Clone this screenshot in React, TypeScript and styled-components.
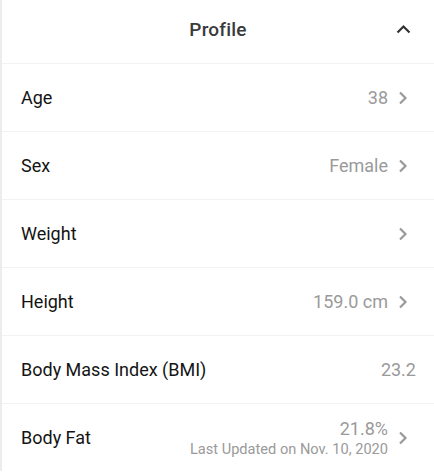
import React from 'react';
import styled, { createGlobalStyle } from 'styled-components';

const GlobalStyle = createGlobalStyle`
  html, body {
    margin: 0;
    padding: 0;
    background: #ffffff;
  }
  body {
    font-family: Roboto, "Liberation Sans", sans-serif;
  }
`;

const Panel = styled.div`
  width: 434px;
  box-sizing: border-box;
  border-left: 2px solid #ececec;
  background: #fff;
`;

const Header = styled.div`
  height: 63px;
  display: grid;
  grid-template-columns: 1fr auto 1fr;
  align-items: center;
  padding: 0 23px;
  border-bottom: 1px solid #f2f2f2;
`;

const Title = styled.h1`
  grid-column: 2;
  margin: 0 0 4px;
  font-size: 19px;
  font-weight: 500;
  color: #3a3a3a;
  letter-spacing: 0.2px;
`;

const CollapseIcon = styled.svg`
  grid-column: 3;
  justify-self: end;
  width: 15px;
  height: 10px;
  margin-top: -5px;
`;

const Row = styled.div`
  height: 67px;
  display: flex;
  align-items: center;
  padding: 0 18px 0 19px;
  border-bottom: 1px solid #f2f2f2;

  &:last-child {
    border-bottom: none;
  }
`;

const Label = styled.div`
  flex: 1;
  font-size: 18px;
  color: #141414;
`;

const ValueBlock = styled.div`
  display: flex;
  flex-direction: column;
  align-items: flex-end;
`;

const Value = styled.span`
  font-size: 18px;
  color: #9a9a9a;
`;

const Note = styled.span`
  font-size: 14.6px;
  color: #9a9a9a;
  margin-top: 1px;
`;

const Chevron = styled.svg`
  width: 10px;
  height: 14px;
  margin: 0 8px 0 10px;
  flex-shrink: 0;
`;

type Item = {
  label: string;
  value?: string;
  note?: string;
  link: boolean;
};

const items: Item[] = [
  { label: 'Age', value: '38', link: true },
  { label: 'Sex', value: 'Female', link: true },
  { label: 'Weight', link: true },
  { label: 'Height', value: '159.0 cm', link: true },
  { label: 'Body Mass Index (BMI)', value: '23.2', link: false },
  { label: 'Body Fat', value: '21.8%', note: 'Last Updated on Nov. 10, 2020', link: true },
];

const App = () => (
  <>
    <GlobalStyle />
    <Panel>
      <Header>
        <Title>Profile</Title>
        <CollapseIcon viewBox="0 0 15 10">
          <path d="M1.5 8.5 L7.5 2.5 L13.5 8.5" fill="none" stroke="#333" strokeWidth="2.2" />
        </CollapseIcon>
      </Header>
      {items.map((it) => (
        <Row key={it.label}>
          <Label>{it.label}</Label>
          <ValueBlock>
            {it.value && <Value>{it.value}</Value>}
            {it.note && <Note>{it.note}</Note>}
          </ValueBlock>
          {it.link && (
            <Chevron viewBox="0 0 10 14">
              <path d="M2 1.5 L7.5 7 L2 12.5" fill="none" stroke="#9a9a9a" strokeWidth="2.2" />
            </Chevron>
          )}
        </Row>
      ))}
    </Panel>
  </>
);

export default App;
